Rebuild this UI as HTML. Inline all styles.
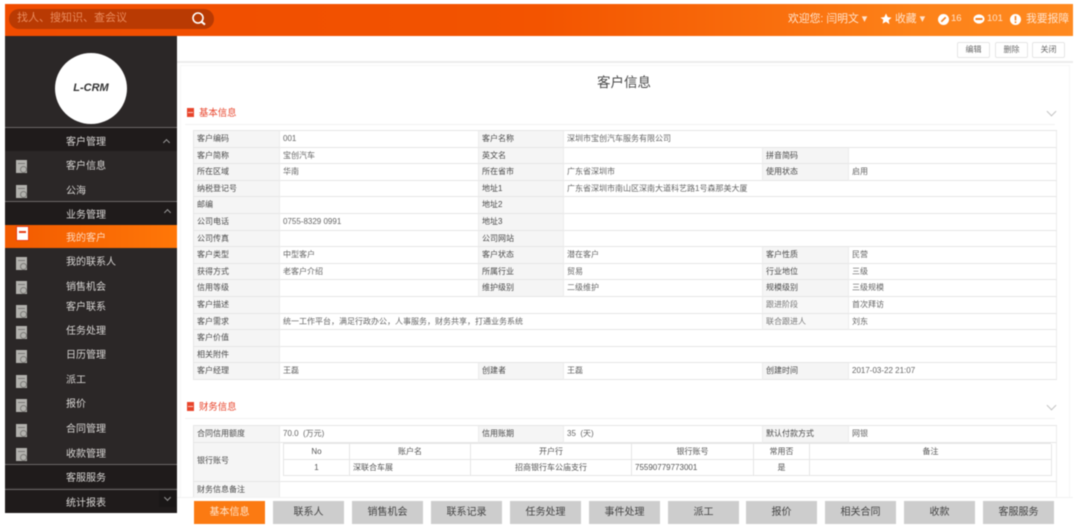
<!DOCTYPE html>
<html lang="zh"><head><meta charset="utf-8"><title>客户信息</title>
<style>
*{box-sizing:border-box;margin:0;padding:0}
html,body{width:1080px;height:530px;overflow:hidden;background:#fff}
body{position:relative;font-family:"Liberation Sans","Noto Sans CJK SC",sans-serif;color:#555}
#w{position:absolute;left:0;top:0;width:1080px;height:530px;background:#fff;filter:blur(.4px)}
.a{position:absolute;white-space:nowrap}
#top{left:5px;top:3.5px;width:1068px;height:32px;background:linear-gradient(90deg,#f04c00 0%,#f35400 50%,#f96c0c 70%,#fd8219 85%,#ff8a20 100%)}
#search{left:9px;top:9px;width:205px;height:19.5px;border-radius:10px;background:#b93a03;color:#e98a5c;font-size:11px;line-height:19.5px;padding-left:8px}
.tt{color:#ffe3cd;font-size:10.8px;line-height:14px;top:12px}
#side{left:5px;top:36px;width:172px;height:476px;background:#2b2727}
#logo{left:55px;top:53px;width:72px;height:71px;border-radius:50%;background:#fff;color:#333;font:italic bold 11px/71px "Liberation Sans",sans-serif;text-align:center}
.hd{position:absolute;left:5px;width:172px;height:24px;background:#1f1b1b;border-top:1px solid #6a6767}
.m{left:66px;margin-top:2px;color:#d8d6d4;font-size:10px;line-height:14px}
.ic{position:absolute;left:16px;margin-top:1px;width:11px;height:13px;background:#b3b2ae}
.ic:after{content:"";position:absolute;left:4px;top:6px;width:5px;height:5px;border:1px solid #7d7c79;border-radius:50%}
.ic:before{content:"";position:absolute;left:2px;top:3px;width:7px;height:1px;background:#7d7c79}
.ch{position:absolute;width:5px;height:5px;border-left:1.5px solid #999;border-top:1.5px solid #999;transform:rotate(45deg)}
#bar{left:177px;top:61px;width:896px;height:2px;background:#ececec}
.btn{position:absolute;top:42px;height:16px;width:33px;border:1px solid #e6e6e6;border-radius:2px;background:#fff;font-size:8px;line-height:14px;text-align:center;color:#666}
#panel{left:180px;top:65px;width:890px;height:432px;border:1px solid #f6f6f6;border-bottom:0;background:#fff}
.sec{left:185px;width:870px;height:1px;background:#f2f2f2}
.st{left:199px;color:#e8452c;font-size:9.4px;line-height:12px}
.di{position:absolute;left:187px;width:7px;height:9px;background:#e8452c}
.di:after{content:"";position:absolute;left:1px;top:4px;width:5px;height:1px;background:#fff;opacity:.7}
.dn{position:absolute;left:1048px;width:7px;height:7px;border-right:1px solid #c4c4c4;border-bottom:1px solid #c4c4c4;transform:rotate(45deg)}
.g{position:absolute;left:193px;width:864px;display:grid;grid-template-columns:86px 199px 85px 199px 86px 208px;border-top:1px solid #e6e6e6;border-left:1px solid #e6e6e6}
.g div{border-right:1px solid #ededed;border-bottom:1px solid #e6e6e6;font-size:8px;line-height:15px;padding-left:3px;white-space:nowrap;overflow:hidden;color:#666}
.g .l{background:#f5f5f5;color:#4a4a4a}
.s3{grid-column:span 3}.s5{grid-column:span 5}.s2{grid-column:span 2}
.in{position:absolute;display:grid;left:283px;top:443px;width:768px;grid-template-columns:66px 121px 161px 122px 56px 242px;grid-auto-rows:16px;border-top:1px solid #e6e6e6;border-left:1px solid #e6e6e6;background:#fff}
.in div{border-right:1px solid #e6e6e6;border-bottom:1px solid #e6e6e6;font-size:8px;line-height:15px;text-align:center;color:#555;white-space:nowrap;overflow:hidden}
.tab{position:absolute;top:501px;height:23px;width:71px;background:#cdcdcd;color:#444;font-size:10px;line-height:23px;text-align:center}
</style></head><body><div id="w">
<div class="a" id="top"></div>
<div class="a" id="search">找人、搜知识、查会议</div>
<svg class="a" style="left:191px;top:11px" width="16" height="16" viewBox="0 0 16 16"><circle cx="7" cy="7" r="5" fill="none" stroke="#fff" stroke-width="1.6"/><path d="M10.5 10.8L14 13.6" stroke="#fff" stroke-width="2"/></svg>
<div class="a tt" style="left:788px">欢迎您: 闫明文 ▾</div>
<svg class="a" style="left:880px;top:13px" width="12" height="12" viewBox="0 0 12 12"><path d="M6 .5l1.7 3.6 3.8.5-2.8 2.6.7 3.9L6 8.8l-3.4 1.8.7-3.9L.5 4.6l3.8-.5z" fill="#fff"/></svg>
<div class="a tt" style="left:895px">收藏 ▾</div>
<svg class="a" style="left:938px;top:14px" width="11" height="11" viewBox="0 0 10 10"><circle cx="5" cy="5" r="5" fill="#fff"/><path d="M3 7l4-4" stroke="#f7801c" stroke-width="1.5"/></svg>
<div class="a tt" style="left:951px;top:12px;font-size:9.5px">16</div>
<svg class="a" style="left:973px;top:14px" width="12" height="10" viewBox="0 0 11 10"><ellipse cx="5.5" cy="5" rx="5.5" ry="4.6" fill="#fff"/><rect x="2" y="4" width="7" height="2" fill="#f7801c"/></svg>
<div class="a tt" style="left:987px;top:12px;font-size:9.5px">101</div>
<svg class="a" style="left:1010px;top:14px" width="11" height="11" viewBox="0 0 11 11"><circle cx="5.5" cy="5.5" r="5.5" fill="#fff"/><rect x="4.7" y="2" width="1.6" height="4.4" fill="#f7801c"/><rect x="4.7" y="7.4" width="1.6" height="1.6" fill="#f7801c"/></svg>
<div class="a tt" style="left:1026px">我要报障</div>

<div class="a" id="side"></div>
<div class="a" id="logo">L-CRM</div>
<div class="hd" style="top:127px"></div>
<div class="hd" style="top:201px;height:24px"></div>
<div class="hd" style="top:464px"></div>
<div class="hd" style="top:488.5px"></div>
<div class="a" style="left:5px;top:225px;width:172px;height:23px;background:linear-gradient(90deg,#f25a00,#ff7708)"></div>
<div class="a m" style="top:134px">客户管理</div><i class="ch" style="left:164px;top:140px"></i>
<span class="ic" style="top:159px"></span><div class="a m" style="top:158px">客户信息</div>
<span class="ic" style="top:184px"></span><div class="a m" style="top:183px">公海</div>
<div class="a m" style="top:207px">业务管理</div><i class="ch" style="left:165px;top:210px"></i>
<span class="a" style="left:17px;top:227px;width:11px;height:13px;background:#fff;box-shadow:0 0 0 1px #e8401a"></span>
<span class="a" style="left:19px;top:231px;width:7px;height:2px;background:#e8401a"></span>
<div class="a m" style="top:230px;color:#ffd9bd">我的客户</div>
<span class="ic" style="top:256px"></span><div class="a m" style="top:254px">我的联系人</div>
<span class="ic" style="top:280px"></span><div class="a m" style="top:279px">销售机会</div>
<span class="ic" style="top:304px"></span><div class="a m" style="top:299px">客户联系</div>
<span class="ic" style="top:325px"></span><div class="a m" style="top:323px">任务处理</div>
<span class="ic" style="top:349px"></span><div class="a m" style="top:347px">日历管理</div>
<span class="ic" style="top:374px"></span><div class="a m" style="top:372px">派工</div>
<span class="ic" style="top:398px"></span><div class="a m" style="top:396px">报价</div>
<span class="ic" style="top:423px"></span><div class="a m" style="top:421px">合同管理</div>
<span class="ic" style="top:447px"></span><div class="a m" style="top:446px">收款管理</div>
<div class="a m" style="top:470px">客服服务</div>
<div class="a m" style="top:495px">统计报表</div>
<div class="a" style="left:159px;top:490px;width:17px;height:17px;background:#1a1717"></div>
<i class="ch" style="left:165px;top:495px;transform:rotate(225deg)"></i>

<div class="a" id="bar"></div>
<div class="btn" style="left:957px">编辑</div>
<div class="btn" style="left:995px">删除</div>
<div class="btn" style="left:1032px">关闭</div>
<div class="a" id="panel"></div>
<div class="a" style="left:597px;top:74px;font-size:13.5px;line-height:18px;color:#4a4a4a">客户信息</div>

<span class="di" style="top:108px"></span>
<div class="a st" style="top:107px">基本信息</div>
<i class="dn" style="top:108px"></i>
<div class="a sec" style="top:124px"></div>

<div class="g" style="top:130px;grid-auto-rows:16.6px">
<div class="l">客户编码</div><div>001</div><div class="l">客户名称</div><div class="s3">深圳市宝创汽车服务有限公司</div>
<div class="l">客户简称</div><div>宝创汽车</div><div class="l">英文名</div><div></div><div class="l">拼音简码</div><div></div>
<div class="l">所在区域</div><div>华南</div><div class="l">所在省市</div><div>广东省深圳市</div><div class="l">使用状态</div><div>启用</div>
<div class="l">纳税登记号</div><div></div><div class="l">地址1</div><div class="s3">广东省深圳市南山区深南大道科艺路1号森那美大厦</div>
<div class="l">邮编</div><div></div><div class="l">地址2</div><div class="s3"></div>
<div class="l">公司电话</div><div>0755-8329 0991</div><div class="l">地址3</div><div class="s3"></div>
<div class="l">公司传真</div><div></div><div class="l">公司网站</div><div class="s3"></div>
<div class="l">客户类型</div><div>中型客户</div><div class="l">客户状态</div><div>潜在客户</div><div class="l">客户性质</div><div>民营</div>
<div class="l">获得方式</div><div>老客户介绍</div><div class="l">所属行业</div><div>贸易</div><div class="l">行业地位</div><div>三级</div>
<div class="l">信用等级</div><div></div><div class="l">维护级别</div><div>二级维护</div><div class="l">规模级别</div><div>三级规模</div>
<div class="l">客户描述</div><div class="s3"></div><div class="l" style="background:#f8f8f8;color:#777">跟进阶段</div><div>首次拜访</div>
<div class="l">客户需求</div><div class="s3">统一工作平台，满足行政办公，人事服务，财务共享，打通业务系统</div><div class="l" style="background:#f8f8f8;color:#777">联合跟进人</div><div>刘东</div>
<div class="l">客户价值</div><div class="s5"></div>
<div class="l">相关附件</div><div class="s5"></div>
<div class="l">客户经理</div><div>王磊</div><div class="l">创建者</div><div>王磊</div><div class="l">创建时间</div><div>2017-03-22 21:07</div>
</div>

<span class="di" style="top:402px"></span>
<div class="a st" style="top:401px">财务信息</div>
<i class="dn" style="top:402px"></i>
<div class="a sec" style="top:418px"></div>

<div class="g" style="top:425px;grid-template-rows:17px 39px 17px;height:72px;overflow:hidden">
<div class="l">合同信用额度</div><div>70.0 &nbsp;(万元)</div><div class="l">信用账期</div><div>35 &nbsp;(天)</div><div class="l">默认付款方式</div><div>网银</div>
<div class="l" style="line-height:36px">银行账号</div><div class="s5"></div>
<div class="l">财务信息备注</div><div class="s5"></div>
</div>
<div class="in">
<div>No</div><div>账户名</div><div>开户行</div><div>银行账号</div><div>常用否</div><div>备注</div>
<div>1</div><div style="text-align:left;padding-left:3px">深联合车展</div><div>招商银行车公庙支行</div><div style="text-align:left;padding-left:3px">75590779773001</div><div>是</div><div></div>
</div>

<div class="a" style="left:177px;top:497px;width:896px;height:33px;background:#fff;border-top:1px solid #f2f2f2"></div>
<div class="tab" style="left:194px;background:#fb7a12;color:#ffe4cc">基本信息</div>
<div class="tab" style="left:273px">联系人</div>
<div class="tab" style="left:352px">销售机会</div>
<div class="tab" style="left:431px">联系记录</div>
<div class="tab" style="left:510px">任务处理</div>
<div class="tab" style="left:589px">事件处理</div>
<div class="tab" style="left:668px">派工</div>
<div class="tab" style="left:746px">报价</div>
<div class="tab" style="left:825px">相关合同</div>
<div class="tab" style="left:904px">收款</div>
<div class="tab" style="left:983px">客服服务</div>
</div></body></html>
